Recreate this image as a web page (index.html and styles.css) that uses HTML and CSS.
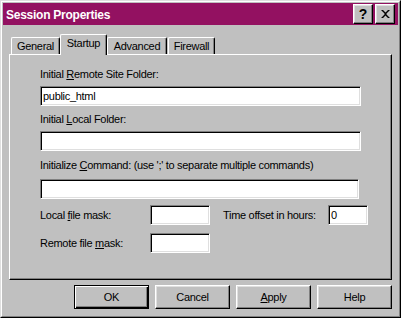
FILE: index.html
```html
<!DOCTYPE html>
<html>
<head>
<meta charset="utf-8">
<link rel="stylesheet" href="styles.css">
</head>
<body>
<div class="window">
  <div class="window-inner">
    <div class="titlebar">
      <span class="title">Session Properties</span>
      <div class="tb-buttons">
        <div class="tb-btn tb-help">?</div>
        <div class="tb-btn tb-close">
          <svg width="9" height="8" viewBox="0 0 9 8"><path d="M0 0h2l2.5 2.5L7 0h2L5.5 3.5V4.5L9 8H7L4.5 5.5L2 8H0l3.5-3.5v-1z" fill="#000"/></svg>
        </div>
      </div>
    </div>
    <div class="body">
      <div class="tabs">
        <div class="tab tab-general">General</div>
        <div class="tab tab-startup active">Startup</div>
        <div class="tab tab-advanced">Advanced</div>
        <div class="tab tab-firewall">Firewall</div>
      </div>
      <div class="panel">
        <div class="label l1">Initial <u>R</u>emote Site Folder:</div>
        <div class="field wide">public_html</div>
        <div class="label l2">Initial <u>L</u>ocal Folder:</div>
        <div class="field wide"></div>
        <div class="label l3">Initialize <u>C</u>ommand: (use ';' to separate multiple commands)</div>
        <div class="field wide cmd"></div>
        <div class="row r1">
          <span class="row-label">Local <u>f</u>ile mask:</span>
          <div class="field mask"></div>
          <span class="row-label time">Time offset in hours:</span>
          <div class="field offset">0</div>
        </div>
        <div class="row r2">
          <span class="row-label">Remote file <u>m</u>ask:</span>
          <div class="field mask"></div>
        </div>
      </div>
      <div class="buttons">
        <div class="btn default">OK</div>
        <div class="btn">Cancel</div>
        <div class="btn"><u>A</u>pply</div>
        <div class="btn">Help</div>
      </div>
    </div>
  </div>
</div>
</body>
</html>
```
FILE: styles.css
```css
* { box-sizing: border-box; }
html, body { margin: 0; padding: 0; }
body {
  width: 401px;
  height: 318px;
  overflow: hidden;
  background: #c0c0c0;
  font-family: "Liberation Sans", Arial, sans-serif;
  font-size: 11px;
  line-height: 13px;
  letter-spacing: -0.3px;
  color: #000;
}
u { text-decoration: underline; text-underline-offset: 1px; }

.window {
  width: 401px;
  height: 318px;
  background: #c0c0c0;
  border: 1px solid;
  border-color: #dfdfdf #000 #000 #dfdfdf;
}
.window-inner {
  height: 100%;
  border: 1px solid;
  border-color: #fff #808080 #808080 #fff;
  padding: 1px;
  display: flex;
  flex-direction: column;
}

.titlebar {
  height: 22px;
  background: #931161;
  display: flex;
  align-items: center;
  justify-content: space-between;
  padding: 0 3px 0 3px;
}
.title {
  align-self: flex-start;
  padding-top: 5px;
  color: #fff;
  font-weight: bold;
  font-size: 12px;
  line-height: 14px;
  letter-spacing: -0.25px;
}
.tb-buttons { display: flex; gap: 2px; }
.tb-btn {
  width: 20px;
  height: 20px;
  background: #c0c0c0;
  border: 1px solid;
  border-color: #fff #000 #000 #fff;
  box-shadow: inset -1px -1px #808080, inset 1px 1px #dfdfdf;
  display: flex;
  align-items: center;
  justify-content: center;
}
.tb-help {
  font-weight: bold;
  font-size: 14px;
  line-height: 14px;
  letter-spacing: 0;
}

.body {
  flex: 1;
  padding: 9px 6px 0 6px;
  display: flex;
  flex-direction: column;
}

.tabs {
  height: 20px;
  display: flex;
  align-items: flex-start;
  padding-left: 2px;
}
.tab {
  height: 17px;
  margin-top: 3px;
  border-top: 1px solid #fff;
  border-left: 1px solid #fff;
  border-right: 1px solid #000;
  border-radius: 2px 2px 0 0;
  box-shadow: inset -1px 0 #808080;
  background: #c0c0c0;
  text-align: center;
  padding-top: 2px;
}
.tab-general { width: 49px; }
.tab-startup { width: 47px; }
.tab-advanced { width: 60px; }
.tab-firewall { width: 47px; margin-left: 1px; }
.tab.active {
  position: relative;
  z-index: 1;
  height: 21px;
  margin-top: 0;
  margin-bottom: -1px;
}

.panel {
  height: 226px;
  border: 1px solid;
  border-color: #fff #000 #000 #fff;
  box-shadow: inset -1px -1px #808080;
  padding: 13px 0 0 30px;
  display: flex;
  flex-direction: column;
  align-items: flex-start;
}
.label { margin-top: 8px; }
.label.l1 { margin-top: 0; }
.label.l2 { margin-top: 7px; }

.field {
  height: 20px;
  margin-top: 5px;
  background: #fff;
  border: 1px solid;
  border-color: #808080 #fff #fff #808080;
  box-shadow: inset 1px 1px #000, inset -1px -1px #dfdfdf;
  padding: 3px 0 0 2px;
}
.field.wide { width: 321px; }
.field.cmd { width: 319px; margin-top: 7px; }

.row {
  display: flex;
  align-items: center;
}
.row .field { margin-top: 0; }
.row.r1 { margin-top: 6px; }
.row.r2 { margin-top: 8px; }
.row-label { width: 110px; }
.row-label.time { width: 105px; margin-left: 13px; }
.field.mask { width: 60px; }
.field.offset { width: 40px; }

.buttons {
  display: flex;
  justify-content: flex-end;
  gap: 6px;
  margin-top: 5px;
}
.btn {
  width: 75px;
  height: 24px;
  border: 1px solid;
  border-color: #fff #000 #000 #fff;
  box-shadow: inset -1px -1px #808080, inset 1px 1px #dfdfdf;
  display: flex;
  align-items: center;
  justify-content: center;
}
.btn.default {
  border-color: #000;
  box-shadow: inset 1px 1px #fff, inset -1px -1px #000, inset -2px -2px #808080;
}
```
